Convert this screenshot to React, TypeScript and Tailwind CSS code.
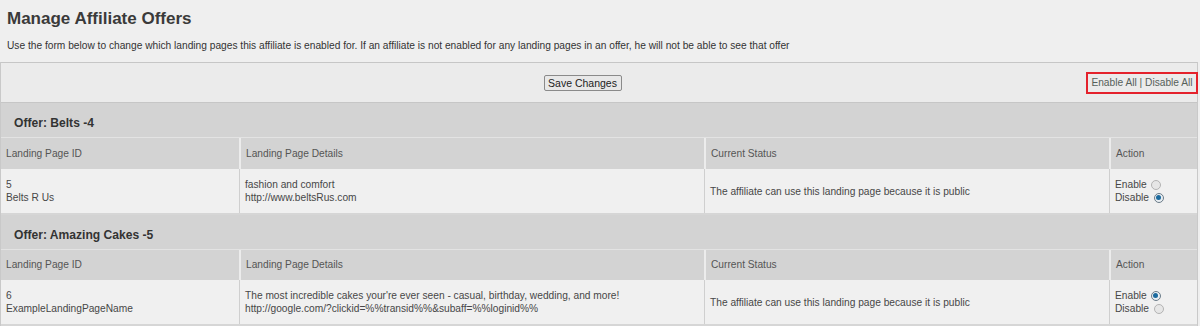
import React from "react";

function Radio({ checked }: { checked: boolean }) {
  return (
    <span
      className={`inline-flex items-center justify-center w-[10px] h-[10px] rounded-full border ${
        checked ? "border-[#6b7b88] bg-[#e9eef2]" : "border-[#b3b3b3] bg-[#e6e6e6]"
      }`}
    >
      {checked && <span className="w-[5px] h-[5px] rounded-full bg-[#1b6a9e]" />}
    </span>
  );
}

type Row = {
  id: string;
  name: string;
  details: string[];
  enabled: boolean;
};

function Offer({ title, row, first }: { title: string; row: Row; first?: boolean }) {
  const grid = "grid grid-cols-[238px_465px_405px_1fr]";
  return (
    <div>
      <div className="h-[34px] bg-[#d3d3d3] flex items-center pl-[13px] pt-[7px] font-bold text-[12.1px] text-[#333]">
        {title}
      </div>
      <div
        className={`${grid} ${first ? "h-[32px]" : "h-[31px]"} bg-[#d3d3d3] border-t border-[#e3e3e3] text-[#555]`}
      >
        <div className="flex items-center pl-[5px]">Landing Page ID</div>
        <div className="flex items-center pl-[5px] border-l-2 border-[#ececec]">Landing Page Details</div>
        <div className="flex items-center pl-[5px] border-l-2 border-[#ececec]">Current Status</div>
        <div className="flex items-center pl-[5px] border-l-2 border-[#ececec]">Action</div>
      </div>
      <div className={`${grid} h-[46px] bg-[#f0f0f0] border-b-2 border-[#d6d6d6] text-[#474747] leading-[13px]`}>
        <div className="flex flex-col justify-center pl-[5px]">
          <div>{row.id}</div>
          <div>{row.name}</div>
        </div>
        <div className="flex flex-col justify-center pl-[5px] border-l border-[#cfcfcf]">
          {row.details.map((d) => (
            <div key={d}>{d}</div>
          ))}
        </div>
        <div className="flex items-center pl-[5px] border-l border-[#cfcfcf]">
          The affiliate can use this landing page because it is public
        </div>
        <div className="flex flex-col justify-center pl-[5px] border-l border-[#cfcfcf]">
          <div className="flex items-center gap-[4px]">
            <span>Enable</span>
            <Radio checked={row.enabled} />
          </div>
          <div className="flex items-center gap-[5px]">
            <span>Disable</span>
            <Radio checked={!row.enabled} />
          </div>
        </div>
      </div>
    </div>
  );
}

export default function App() {
  return (
    <div className="w-[1200px] h-[326px] overflow-hidden bg-[#efefef] font-['Liberation_Sans',Arial,sans-serif] text-[10.2px]">
      <h1 className="pl-[7px] pt-[8px] text-[17px] leading-[22px] font-bold text-[#3a3a3a]">
        Manage Affiliate Offers
      </h1>
      <p className="pl-[7px] mt-[9px] leading-[13px] text-[#333]">
        Use the form below to change which landing pages this affiliate is enabled for. If an affiliate is not enabled
        for any landing pages in an offer, he will not be able to see that offer
      </p>
      <div className="mt-[10px] w-[1198px] border-x border-[#c9c9c9]">
        <div className="h-[41px] border-y border-[#c6c6c6] bg-[#ebebeb] flex items-center">
          <div className="flex-1 flex justify-center pl-[78px]">
            <button className="h-[16px] w-[78px] border border-[#8a8a8a] rounded-[2px] bg-[#e8e8e8] text-[#222] text-[10.5px] leading-[14px] mt-[1px]">
              Save Changes
            </button>
          </div>
          <div className="w-[112px] h-[22px] -mr-[1px] border-2 border-[#e4222c] flex items-center justify-center text-[#56605a]">
            Enable All | Disable All
          </div>
        </div>
        <Offer
          first
          title="Offer: Belts -4"
          row={{ id: "5", name: "Belts R Us", details: ["fashion and comfort", "http://www.beltsRus.com"], enabled: false }}
        />
        <Offer
          title="Offer: Amazing Cakes -5"
          row={{
            id: "6",
            name: "ExampleLandingPageName",
            details: [
              "The most incredible cakes your're ever seen - casual, birthday, wedding, and more!",
              "http://google.com/?clickid=%%transid%%&subaff=%%loginid%%",
            ],
            enabled: true,
          }}
        />
      </div>
    </div>
  );
}
